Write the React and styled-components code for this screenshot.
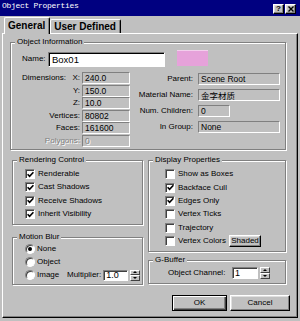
import React from "react";
import styled, { createGlobalStyle, css } from "styled-components";

const GlobalStyle = createGlobalStyle`
  *, *::before, *::after { box-sizing: border-box; }
  html, body { margin: 0; padding: 0; background: #c0c0c0; }
  body { font-family: "Liberation Sans", Arial, sans-serif; }
`;

const raised = css`
  border-top: 1px solid #fff;
  border-left: 1px solid #fff;
  border-right: 1px solid #000;
  border-bottom: 1px solid #000;
  box-shadow: inset -1px -1px 0 #808080, inset 1px 1px 0 #dfdfdf;
`;

const sunken = css`
  border-top: 1px solid #808080;
  border-left: 1px solid #808080;
  border-right: 1px solid #fff;
  border-bottom: 1px solid #fff;
`;

const disabledText = css`
  color: #808080;
  text-shadow: 1px 1px 0 #fff;
`;

const Window = styled.div`
  width: 300px;
  height: 321px;
  overflow: hidden;
  background: #c0c0c0;
  font-size: 8px;
  color: #000;
`;

const TitleBar = styled.div`
  height: 16px;
  background: #000080;
  display: flex;
  align-items: flex-start;
  justify-content: space-between;
  padding: 0 4px 0 2px;
`;

const TitleText = styled.span`
  color: #fff;
  font-family: "Liberation Mono", "DejaVu Sans Mono", monospace;
  font-size: 8px;
  letter-spacing: -0.3px;
  line-height: 12px;
`;

const TitleButtons = styled.div`
  display: flex;
  gap: 1px;
  margin-top: 4px;
`;

const TitleButton = styled.span`
  ${raised};
  width: 11px;
  height: 10px;
  background: #c0c0c0;
  display: flex;
  align-items: center;
  justify-content: center;
  font-weight: bold;
  font-size: 8px;
  line-height: 8px;
`;

const TabStrip = styled.div`
  display: flex;
  align-items: flex-end;
  height: 17px;
  padding-left: 4px;
`;

const Tab = styled.div`
  position: relative;
  z-index: 1;
  height: ${(p) => (p.$active ? 17 : 14)}px;
  margin-bottom: ${(p) => (p.$active ? -1 : 0)}px;
  padding: 0 4px 1px 3px;
  display: flex;
  align-items: center;
  background: #c0c0c0;
  border-top: 1px solid #fff;
  border-left: 1px solid #fff;
  border-right: 1px solid #000;
  box-shadow: inset -1px 0 0 #808080;
  border-radius: 2px 2px 0 0;
  font-weight: bold;
  font-size: 10px;
  white-space: nowrap;
`;

const Panel = styled.div`
  margin: 0 2px;
  height: 285px;
  border-top: 1px solid #fff;
  border-left: 1px solid #fff;
  border-right: 1px solid #000;
  border-bottom: 1px solid #000;
  box-shadow: inset -1px -1px 0 #808080;
  padding: 8px 7px 0 0;
  display: flex;
  flex-direction: column;
`;

const Group = styled.div`
  width: ${(p) => p.$w}px;
  margin-top: ${(p) => p.$mt || 0}px;
  margin-left: ${(p) => p.$ml || 0}px;
  border: 1px solid #808080;
  box-shadow: inset 1px 1px 0 #fff, 1px 1px 0 #fff;
`;

const Legend = styled.div`
  width: fit-content;
  height: 10px;
  margin: -6px 0 0 4px;
  padding: 0 2px;
  background: #c0c0c0;
  line-height: 10px;
  white-space: nowrap;
`;

const NameRow = styled.div`
  display: flex;
  align-items: flex-start;
  height: 17px;
  margin-top: 3px;
  padding-left: 11px;
`;

const NameLabel = styled.span`
  width: 26px;
  margin-top: 4px;
  line-height: 10px;
`;

const NameInput = styled.div`
  width: 117px;
  height: 15px;
  margin-top: 2px;
  background: #fff;
  ${sunken};
  box-shadow: inset 1px 1px 0 #000;
  padding-left: 3px;
  font-size: 9.5px;
  line-height: 13px;
`;

const Swatch = styled.div`
  width: 31px;
  height: 16px;
  margin-left: 12px;
  background: #e6a2da;
  border-top: 1px solid #f2cfec;
`;

const InfoBody = styled.div`
  display: flex;
  align-items: flex-start;
  margin-top: 5px;
  padding: 0 0 2px 11px;
`;

const InfoGrid = styled.div`
  display: grid;
  grid-template-columns: ${(p) => p.$cols};
  column-gap: ${(p) => p.$colGap}px;
  row-gap: ${(p) => p.$rowGap}px;
  grid-auto-rows: 12px;
  margin-left: ${(p) => p.$ml || 0}px;
  margin-top: ${(p) => p.$mt || 0}px;
`;

const InfoLabel = styled.span`
  display: flex;
  align-items: center;
  justify-content: ${(p) => (p.$split ? "space-between" : "flex-end")};
  white-space: nowrap;
  line-height: 10px;
  ${(p) => p.$disabled && disabledText};
`;

const InfoField = styled.span`
  ${sunken};
  width: ${(p) => (p.$w ? `${p.$w}px` : "100%")};
  display: flex;
  align-items: center;
  padding-left: 2px;
  font-size: 8.5px;
  white-space: nowrap;
  overflow: hidden;
  font-family: "Liberation Sans", "Noto Sans CJK SC", sans-serif;
  ${(p) => p.$disabled && disabledText};
`;

const Lower = styled.div`
  display: flex;
  align-items: flex-start;
  gap: 5px;
  margin: 10px 0 0 9px;
`;

const Column = styled.div`
  display: flex;
  flex-direction: column;
`;

const OptionList = styled.div`
  display: flex;
  flex-direction: column;
  padding: ${(p) => p.$pt}px 0 ${(p) => p.$pb}px ${(p) => p.$pl}px;
`;

const OptionRow = styled.div`
  display: flex;
  align-items: center;
  height: ${(p) => p.$h}px;
  white-space: nowrap;
`;

const CheckBox = styled.span`
  width: 10px;
  height: 10px;
  margin-right: 3px;
  background: #fff;
  ${sunken};
  box-shadow: inset 1px 1px 0 #404040;
  display: flex;
  align-items: center;
  justify-content: center;
`;

const Radio = styled.span`
  width: 10px;
  height: 10px;
  margin-right: 2px;
  border-radius: 50%;
  background: #fff;
  border: 1px solid;
  border-color: #808080 #fff #fff #808080;
  box-shadow: inset 1px 1px 0 #404040;
  display: flex;
  align-items: center;
  justify-content: center;
  &::after {
    content: "";
    width: 4px;
    height: 4px;
    border-radius: 50%;
    background: ${(p) => (p.$on ? "#000" : "transparent")};
  }
`;

const OptionText = styled.span`
  width: ${(p) => (p.$w ? `${p.$w}px` : "auto")};
  line-height: 10px;
`;

const SmallButton = styled.span`
  ${raised};
  width: 32px;
  height: 12px;
  margin-left: 3px;
  background: #c0c0c0;
  display: flex;
  align-items: center;
  justify-content: center;
  line-height: 10px;
`;

const SpinField = styled.span`
  ${sunken};
  box-shadow: inset 1px 1px 0 #404040;
  width: ${(p) => p.$w}px;
  height: ${(p) => p.$h}px;
  margin-left: ${(p) => p.$ml || 0}px;
  background: #fff;
  display: flex;
  align-items: center;
  padding-left: 2px;
  font-size: 9px;
`;

const SpinBox = styled.span`
  width: 10px;
  height: ${(p) => p.$h}px;
  margin-left: 2px;
  display: flex;
  flex-direction: column;
`;

const SpinHalf = styled.span`
  flex: 1;
  background: #c0c0c0;
  border-top: 1px solid #fff;
  border-left: 1px solid #fff;
  border-right: 1px solid #404040;
  border-bottom: 1px solid #404040;
  display: flex;
  align-items: center;
  justify-content: center;
  &::after {
    content: "";
    border-left: 2px solid transparent;
    border-right: 2px solid transparent;
    ${(p) =>
      p.$up
        ? "border-bottom: 2px solid #000;"
        : "border-top: 2px solid #000;"}
  }
`;

const ButtonRow = styled.div`
  display: flex;
  justify-content: flex-end;
  gap: 3px;
  margin-top: 10.5px;
`;

const DialogButton = styled.span`
  width: ${(p) => p.$w}px;
  height: 16px;
  background: #c0c0c0;
  display: flex;
  align-items: center;
  justify-content: center;
  font-size: 8px;
  line-height: 10px;
  ${(p) =>
    p.$default
      ? css`
          border: 1px solid #000;
          box-shadow: inset 1px 1px 0 #fff, inset -1px -1px 0 #404040,
            inset -2px -2px 0 #808080;
        `
      : raised};
`;

const CheckMark = () => (
  <svg width="7" height="7" viewBox="0 0 7 7">
    <path d="M0.6 3.2 L2.6 5.3 L6.4 1.2" fill="none" stroke="#000" strokeWidth="1.6" />
  </svg>
);

const CloseGlyph = () => (
  <svg width="6" height="6" viewBox="0 0 6 6">
    <path d="M0.5 0.5 L5.5 5.5 M5.5 0.5 L0.5 5.5" stroke="#000" strokeWidth="1.4" />
  </svg>
);

const Spinner = ({ value, w, h, ml }) => (
  <>
    <SpinField $w={w} $h={h} $ml={ml}>{value}</SpinField>
    <SpinBox $h={h}>
      <SpinHalf $up />
      <SpinHalf />
    </SpinBox>
  </>
);

const dims = [
  { label: "X:", value: "240.0", lead: "Dimensions:" },
  { label: "Y:", value: "150.0" },
  { label: "Z:", value: "10.0" },
  { label: "Vertices:", value: "80802" },
  { label: "Faces:", value: "161600" },
  { label: "Polygons:", value: "0", disabled: true },
];

const props = [
  { label: "Parent:", value: "Scene Root" },
  { label: "Material Name:", value: "金字材质" },
  { label: "Num. Children:", value: "0", w: 32 },
  { label: "In Group:", value: "None" },
];

const rendering = [
  { label: "Renderable", checked: true },
  { label: "Cast Shadows", checked: true },
  { label: "Receive Shadows", checked: true },
  { label: "Inherit Visibility", checked: true },
];

const display = [
  { label: "Show as Boxes", checked: false },
  { label: "Backface Cull", checked: true },
  { label: "Edges Only", checked: true },
  { label: "Vertex Ticks", checked: false },
  { label: "Trajectory", checked: false },
  { label: "Vertex Colors", checked: false, extra: true },
];

export default function App() {
  return (
    <Window>
      <GlobalStyle />
      <TitleBar>
        <TitleText>Object Properties</TitleText>
        <TitleButtons>
          <TitleButton>?</TitleButton>
          <TitleButton>
            <CloseGlyph />
          </TitleButton>
        </TitleButtons>
      </TitleBar>

      <TabStrip>
        <Tab $active>General</Tab>
        <Tab>User Defined</Tab>
      </TabStrip>

      <Panel>
        <Group $w={276} $ml={7}>
          <Legend>Object Information</Legend>
          <NameRow>
            <NameLabel>Name:</NameLabel>
            <NameInput>Box01</NameInput>
            <Swatch />
          </NameRow>
          <InfoBody>
            <InfoGrid $cols="58px 48px" $colGap={2} $rowGap={0.6}>
              {dims.map((d) => (
                <React.Fragment key={d.label}>
                  <InfoLabel $split={!!d.lead} $disabled={d.disabled}>
                    {d.lead && <span>{d.lead}</span>}
                    <span>{d.label}</span>
                  </InfoLabel>
                  <InfoField $disabled={d.disabled}>{d.value}</InfoField>
                </React.Fragment>
              ))}
            </InfoGrid>
            <InfoGrid $cols="53px 82px" $colGap={5} $rowGap={4} $ml={10} $mt={1}>
              {props.map((p) => (
                <React.Fragment key={p.label}>
                  <InfoLabel>{p.label}</InfoLabel>
                  <InfoField $w={p.w}>{p.value}</InfoField>
                </React.Fragment>
              ))}
            </InfoGrid>
          </InfoBody>
        </Group>

        <Lower>
          <Column>
            <Group $w={131}>
              <Legend>Rendering Control</Legend>
              <OptionList $pt={2.5} $pb={3.5} $pl={12}>
                {rendering.map((o) => (
                  <OptionRow key={o.label} $h={13.3}>
                    <CheckBox>{o.checked && <CheckMark />}</CheckBox>
                    <OptionText>{o.label}</OptionText>
                  </OptionRow>
                ))}
              </OptionList>
            </Group>
            <Group $w={131} $mt={12}>
              <Legend>Motion Blur</Legend>
              <OptionList $pt={0.5} $pb={2} $pl={12}>
                <OptionRow $h={13}>
                  <Radio $on />
                  <OptionText>None</OptionText>
                </OptionRow>
                <OptionRow $h={13}>
                  <Radio />
                  <OptionText>Object</OptionText>
                </OptionRow>
                <OptionRow $h={13}>
                  <Radio />
                  <OptionText $w={30}>Image</OptionText>
                  <OptionText>Multiplier:</OptionText>
                  <Spinner value="1.0" w={25} h={11} ml={2} />
                </OptionRow>
              </OptionList>
            </Group>
          </Column>

          <Column>
            <Group $w={138}>
              <Legend>Display Properties</Legend>
              <OptionList $pt={2.5} $pb={3.5} $pl={16}>
                {display.map((o) => (
                  <OptionRow key={o.label} $h={13.4}>
                    <CheckBox>{o.checked && <CheckMark />}</CheckBox>
                    <OptionText>{o.label}</OptionText>
                    {o.extra && <SmallButton>Shaded</SmallButton>}
                  </OptionRow>
                ))}
              </OptionList>
            </Group>
            <Group $w={138} $mt={7.5}>
              <Legend>G-Buffer</Legend>
              <OptionList $pt={1.5} $pb={3.5} $pl={19}>
                <OptionRow $h={13}>
                  <OptionText $w={64}>Object Channel:</OptionText>
                  <Spinner value="1" w={26} h={12} />
                </OptionRow>
              </OptionList>
            </Group>
          </Column>
        </Lower>

        <ButtonRow>
          <DialogButton $w={55} $default>OK</DialogButton>
          <DialogButton $w={60}>Cancel</DialogButton>
        </ButtonRow>
      </Panel>
    </Window>
  );
}
